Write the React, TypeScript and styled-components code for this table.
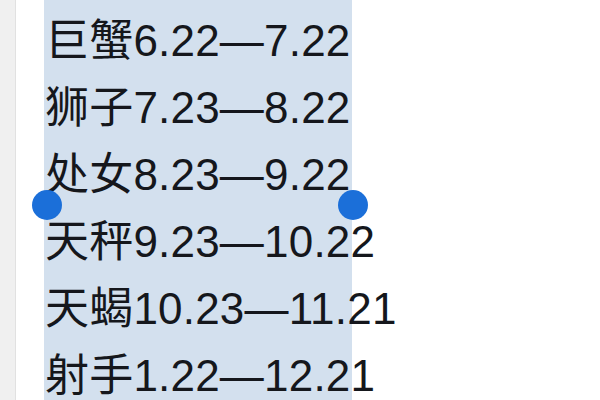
import React from "react";
import styled, { createGlobalStyle } from "styled-components";

const Global = createGlobalStyle`
  html, body { margin: 0; padding: 0; background: #ffffff; }
  body { width: 600px; height: 400px; overflow: hidden; }
`;

const Page = styled.div`
  position: relative;
  display: flex;
  width: 600px;
  height: 400px;
  background: #ffffff;
  overflow: hidden;
`;

const Gutter = styled.div`
  width: 15px;
  flex: none;
  background: #f0f0f0;
  border-right: 1px solid #e1e1e1;
`;

const Margin = styled.div`
  width: 28px;
  flex: none;
  background: #ffffff;
`;

const Selection = styled.div`
  width: 308px;
  flex: none;
  background: #d3e0ee;
  padding-top: 7px;
  padding-left: 1px;
  box-sizing: border-box;
`;

const Line = styled.div`
  font-family: "Liberation Sans", "Noto Sans CJK SC", sans-serif;
  font-size: 44px;
  letter-spacing: 0.2px;
  line-height: 67px;
  height: 67px;
  color: #15171c;
  white-space: nowrap;
`;

const Handle = styled.div<{ $x: number }>`
  position: absolute;
  left: ${(p) => p.$x - 15}px;
  top: 190px;
  width: 30px;
  height: 30px;
  border-radius: 50%;
  background: #1b6fd9;
`;

const lines = [
  "巨蟹6.22—7.22",
  "狮子7.23—8.22",
  "处女8.23—9.22",
  "天秤9.23—10.22",
  "天蝎10.23—11.21",
  "射手1.22—12.21",
];

export default function App() {
  return (
    <Page>
      <Global />
      <Gutter />
      <Margin />
      <Selection>
        {lines.map((t) => (
          <Line key={t}>{t}</Line>
        ))}
      </Selection>
      <Handle $x={47} />
      <Handle $x={353} />
    </Page>
  );
}
